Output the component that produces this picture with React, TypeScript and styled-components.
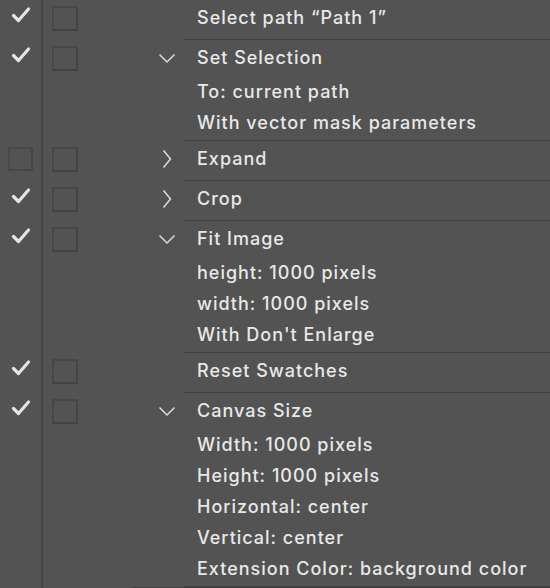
import React from 'react';
import styled, {createGlobalStyle} from 'styled-components';

const Global = createGlobalStyle`
  html, body {
    margin: 0;
    padding: 0;
    background: #535353;
  }
  body {
    width: 550px;
    height: 588px;
    overflow: hidden;
    font-family: Inter, "Liberation Sans", sans-serif;
    -webkit-font-smoothing: antialiased;
  }
`;

const List = styled.div`
  display: flex;
  flex-direction: column;
`;

const Step = styled.div`
  display: flex;
  align-items: stretch;
`;

const CheckCol = styled.div`
  width: 41px;
  flex: none;
  border-right: 2px solid #464646;
  display: flex;
  justify-content: center;
`;

const BoxCol = styled.div`
  width: 98px;
  flex: none;
  padding-left: 9px;
`;

const ChevronCol = styled.div`
  width: 34px;
  flex: none;
  display: flex;
  justify-content: center;
`;

const Slot = styled.div<{$lift?: number}>`
  height: 36px;
  display: flex;
  align-items: center;
  margin-top: ${p => -(p.$lift || 0)}px;
`;

const Body = styled.div<{$open: boolean}>`
  flex: 1;
  padding: 0 0 ${p => (p.$open ? 2 : 3)}px 13px;
  border-bottom: 1px solid #3f3f3f;
`;

const Title = styled.div`
  height: 36px;
  line-height: 36px;
  font-size: 18px;
  font-weight: 500;
  letter-spacing: 1px;
  color: #e8e8e8;
  white-space: nowrap;
`;

const Detail = styled(Title)`
  height: 31px;
  line-height: 31px;
`;

const Box = styled.div`
  width: 22px;
  height: 21px;
  border: 2px solid #474747;
  border-bottom-color: #424242;
  border-right-color: #444;
`;

const Toggle = styled.div`
  width: 21px;
  height: 20px;
  border: 2px solid #474747;
`;

const EndLine = styled.div`
  flex: 1;
  margin-left: 88px;
  border-top: 2px solid #434343;
`;

function Check() {
  return (
    <svg width="20" height="18" viewBox="0 0 20 18">
      <path d="M2.5 9.5 L7.5 14.5 L17.5 3" fill="none" stroke="#e4e4e4" strokeWidth="3.2"
            strokeLinecap="round" strokeLinejoin="round"/>
    </svg>
  );
}

function Chevron({open}: {open: boolean}) {
  return open ? (
    <svg width="18" height="11" viewBox="0 0 18 11">
      <path d="M1.5 1.5 L9 9 L16.5 1.5" fill="none" stroke="#dcdcdc" strokeWidth="1.5"/>
    </svg>
  ) : (
    <svg width="10" height="20" viewBox="0 0 10 20">
      <path d="M1.5 1.5 L8.5 10 L1.5 18.5" fill="none" stroke="#dcdcdc" strokeWidth="1.5"/>
    </svg>
  );
}

type Item = {title: string; on: boolean; chevron?: 'open' | 'closed'; details?: string[]};

const steps: Item[] = [
  {title: 'Select path \u201cPath 1\u201d', on: true},
  {title: 'Set Selection', on: true, chevron: 'open', details: ['To: current path', 'With vector mask parameters']},
  {title: 'Expand', on: false, chevron: 'closed'},
  {title: 'Crop', on: true, chevron: 'closed'},
  {title: 'Fit Image', on: true, chevron: 'open', details: ['height: 1000 pixels', 'width: 1000 pixels', "With Don't Enlarge"]},
  {title: 'Reset Swatches', on: true},
  {title: 'Canvas Size', on: true, chevron: 'open', details: [
    'Width: 1000 pixels', 'Height: 1000 pixels', 'Horizontal: center', 'Vertical: center',
    'Extension Color: background color',
  ]},
];

export default function App() {
  return (
    <>
      <Global/>
      <List>
        {steps.map(step =>
          <Step key={step.title}>
            <CheckCol>
              <Slot $lift={step.on ? 3 : 0}>{step.on ? <Check/> : <Toggle/>}</Slot>
            </CheckCol>
            <BoxCol>
              <Slot><Box/></Slot>
            </BoxCol>
            <ChevronCol>
              <Slot>{step.chevron && <Chevron open={step.chevron === 'open'}/>}</Slot>
            </ChevronCol>
            <Body $open={!!step.details}>
              <Title>{step.title}</Title>
              {step.details?.map(d => <Detail key={d}>{d}</Detail>)}
            </Body>
          </Step>
        )}
        <Step>
          <CheckCol/>
          <EndLine/>
        </Step>
      </List>
    </>
  );
}
